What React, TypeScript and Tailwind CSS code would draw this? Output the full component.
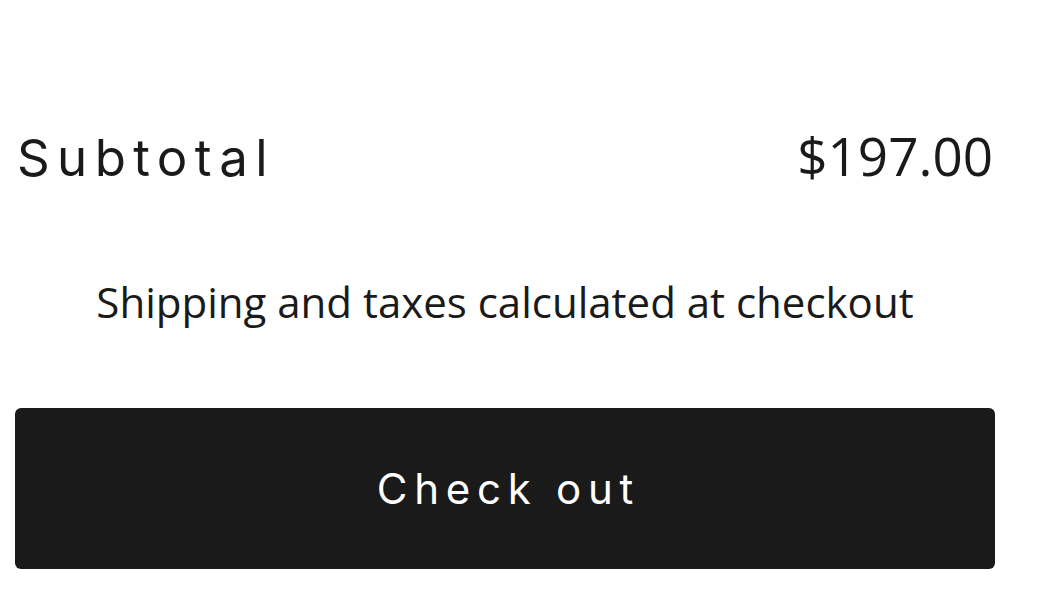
import React from "react"

export default function App() {
  return (
    <div className="w-[1045px] h-[589px] bg-white text-[#1a1a1a] overflow-hidden">
      <div className="w-[980px] ml-[15px] pt-[129px]">
        <div className="flex items-baseline justify-between h-[72px]">
          <h2 className="font-['Inter',sans-serif] text-[51px] tracking-[0.145em] leading-none ml-[2px]">
            Subtotal
          </h2>
          <span className="font-['Open_Sans',sans-serif] text-[53px] leading-none mr-[2px]">
            $197.00
          </span>
        </div>
        <p className="mt-[73px] text-center font-['Open_Sans',sans-serif] text-[42px] leading-[56px]">
          Shipping and taxes calculated at checkout
        </p>
        <button className="mt-[78px] w-full h-[161px] rounded-[6px] bg-[#1a1a1a] text-white font-['Inter',sans-serif] text-[42px] tracking-[0.16em]">
          <span className="ml-[0.16em]">Check out</span>
        </button>
      </div>
    </div>
  )
}
